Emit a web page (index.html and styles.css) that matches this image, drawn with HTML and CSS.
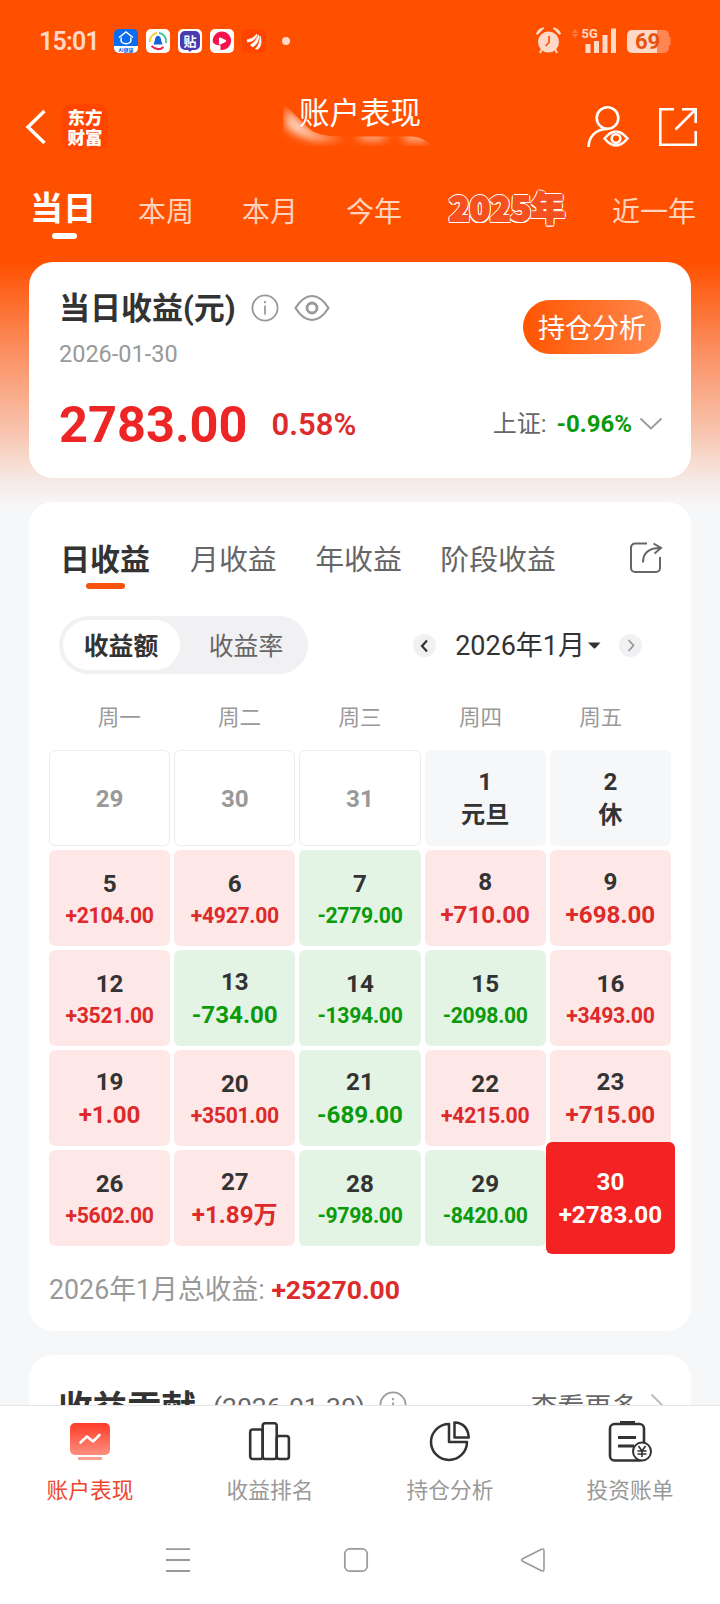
FILE: index.html
```html
<!DOCTYPE html>
<html lang="zh-CN">
<head>
    <meta charset="UTF-8">
    <meta name="viewport" content="width=device-width, initial-scale=1.0">
    <title>账户表现</title>
    <link rel="stylesheet" href="styles.css">
</head>
<body>
    <div class="app">
        <!-- Status bar -->
        <div class="status-bar">
            <span class="clock">15:01</span>
            <div class="apps">
                <svg width="24" height="24" viewBox="0 0 24 24">
                    <rect width="24" height="24" rx="5" fill="#0a6cf0"/>
                    <path d="M0 17h24v2a5 5 0 0 1-5 5H5a5 5 0 0 1-5-5z" fill="#fff"/>
                    <path d="M5 8.500l7-5.500 7 5.500M7.500 8.500a5.500 5.500 0 0 0 0 4.500q4.500 3.500 9 0a5.500 5.500 0 0 0 0-4.500" fill="none" stroke="#fff" stroke-width="1.500"/>
                    <text x="12" y="22.500" class="tiny" font-size="5" fill="#0a6cf0">AI健康</text>
                </svg>
                <svg width="24" height="24" viewBox="0 0 24 24">
                    <rect width="24" height="24" rx="5" fill="#fff"/>
                    <g fill="none" stroke-width="1.800">
                        <path d="M4 13A8.500 8.500 0 0 1 11 3.800" stroke="#f5c92e"/>
                        <path d="M13 3.800A8.500 8.500 0 0 1 20 14" stroke="#2fc0a0"/>
                        <path d="M5.500 17q6.500 6 12 1" stroke="#e5204e"/>
                    </g>
                    <path d="M12 6.500q3 1 3.200 5l1.300 4h-9l1.300-4q.2-4 3.200-5z" fill="#1565d8"/>
                </svg>
                <svg width="24" height="24" viewBox="0 0 24 24">
                    <rect width="24" height="24" rx="5" fill="#fff"/>
                    <path d="M7 2h10a5 5 0 0 1 5 5v9a5 5 0 0 1-5 5h-3l-2 2-2-2H7a5 5 0 0 1-5-5V7a5 5 0 0 1 5-5z" fill="#4a3bb0"/>
                    <text x="12" y="16.500" class="tiny" font-size="13" fill="#fff">贴</text>
                </svg>
                <svg width="24" height="24" viewBox="0 0 24 24">
                    <rect width="24" height="24" rx="5" fill="#fff"/>
                    <path d="M12 2.500a9.300 9.300 0 1 1-1.500 18.500V16.500Q4 16 2.800 13A9.300 9.300 0 0 1 12 2.500z" fill="#f5124a"/>
                    <path d="M10 9.500l5 2.500-5 2.500z" fill="#fff" stroke="#fff" stroke-width="2.200" stroke-linejoin="round"/>
                </svg>
                <svg width="24" height="24" viewBox="0 0 24 24">
                    <rect width="24" height="24" rx="5" fill="#ff4400"/>
                    <path d="M5 11q6-1 10-6-1 7-9.500 8zM8.500 16q6-3 8-10 1 8-6 12zM13.500 20q5-5 4.500-13 3 8-2 13z" fill="#fff" stroke="#fff" stroke-width=".8"/>
                </svg>
            </div>
            <span class="more-dot"></span>
            <svg class="signals" width="140" height="28" viewBox="0 0 140 28">
                <g fill="#ffd8c7">
                    <circle cx="12.500" cy="15" r="10.500"/>
                    <path d="M.5 7Q2 1 8 1L1.500 7.500zM24.500 7Q23 1 17 1l6.500 6.500z" stroke="#ffd8c7"/>
                    <path d="M6 22l-2 4M19 22l2 4" stroke="#ffd8c7" stroke-width="2"/>
                    <path d="M49.500 17h5v9h-5zM58 14h5v12h-5zM66.500 8h5v18h-5zM75 1.500h5V26h-5z"/>
                    <path d="M96 3h25v23H96a5 5 0 0 1-5-5V8a5 5 0 0 1 5-5z"/>
                </g>
                <path d="M13 9v6.500L9.500 19" fill="none" stroke="#ff5000" stroke-width="1.700"/>
                <path d="M39 2l3 4h-6zM39 11l3-4h-6z" fill="#ff7a3f"/>
                <path d="M121 3h7a5 5 0 0 1 5 5v2h1.500v8H133v3a5 5 0 0 1-5 5h-7z" fill="#ff8650"/>
                <text x="45.500" y="11" class="net" fill="#ffd8c7">5G</text>
                <text x="99" y="22" class="level" fill="#e8520f">69</text>
            </svg>
        </div>

        <!-- Title bar -->
        <div class="title-bar">
            <svg class="back" width="22" height="36" viewBox="0 0 22 36"><path d="M19.500 2L3 18l16.500 16" fill="none" stroke="#fff" stroke-width="3.400"/></svg>
            <div class="brand"><span>东方</span><span>财富</span></div>
            <div class="title">
                <svg class="title-glow" width="160" height="44" viewBox="0 0 160 44">
                    <defs>
                        <filter id="soft" x="-50%" y="-100%" width="200%" height="300%"><feGaussianBlur stdDeviation="4"/></filter>
                        <clipPath id="under"><path d="M1 0Q6 2 9 5.500L26 22.500Q34 31.500 62 31.500H130Q142 32 150 41H1z"/></clipPath>
                    </defs>
                    <g clip-path="url(#under)">
                        <g fill="#fff" filter="url(#soft)">
                            <path d="M4 3L26 23Q36 32 62 32Q44 37 28 34Q12 30 4 22z" opacity=".75"/>
                            <ellipse cx="90" cy="31" rx="15" ry="5" opacity=".55"/>
                            <ellipse cx="134" cy="31" rx="14" ry="6" opacity=".55"/>
                        </g>
                    </g>
                </svg>
                <span>账户表现</span>
            </div>
            <svg class="user" width="44" height="44" viewBox="0 0 44 44" fill="none" stroke="#fff" stroke-width="2.600">
                <circle cx="21.500" cy="13" r="10.800"/>
                <path d="M2.500 42C3 31 10 24 21.500 24"/>
                <path d="M18.500 33.500q11.500-14 23 0-11.500 14-23 0z"/>
                <circle cx="30" cy="33.500" r="4.300"/>
            </svg>
            <svg class="open" width="40" height="40" viewBox="0 0 40 40" fill="none" stroke="#fff" stroke-width="2.600">
                <path d="M16 2.300H2.300v35.400h35.400V24M24 2.300h13.700V16M37 3L17.500 22.500"/>
            </svg>
        </div>

        <!-- Period tabs -->
        <div class="periods">
            <span class="period current">当日</span>
            <span class="period">本周</span>
            <span class="period">本月</span>
            <span class="period">今年</span>
            <span class="period year">2025年</span>
            <span class="period">近一年</span>
        </div>

        <div class="content">
            <!-- Today's profit -->
            <div class="card today">
                <div class="today-top">
                    <div>
                        <div class="today-title">
                            <span>当日收益(元)</span>
                            <svg class="info" width="28" height="28" viewBox="0 0 28 28" fill="none" stroke="#999" stroke-width="1.800">
                                <circle cx="14" cy="14" r="12.600"/><path d="M14 11.500v9M14 7v2.300"/>
                            </svg>
                            <svg class="eye" width="36" height="28" viewBox="0 0 36 28" fill="none" stroke="#999" stroke-width="2.200">
                                <path d="M1.500 14Q9 2 18 2t16.500 12Q27 26 18 26T1.500 14z"/><circle cx="18" cy="14" r="5" stroke-width="2.800"/>
                            </svg>
                        </div>
                        <div class="date">2026-01-30</div>
                    </div>
                    <button class="analyse">持仓分析</button>
                </div>
                <div class="today-bottom">
                    <span class="amount">2783.00</span>
                    <span class="rate">0.58%</span>
                    <span class="index">上证:</span>
                    <span class="index-rate">-0.96%</span>
                    <svg class="more" width="22" height="14" viewBox="0 0 22 14"><path d="M.5 1.500l10.500 10 10.500-10" fill="none" stroke="#999" stroke-width="1.800"/></svg>
                </div>
            </div>

            <!-- Profit calendar -->
            <div class="card profit">
                <div class="profit-tabs">
                    <span class="profit-tab current">日收益</span>
                    <span class="profit-tab">月收益</span>
                    <span class="profit-tab">年收益</span>
                    <span class="profit-tab">阶段收益</span>
                    <svg class="share" width="34" height="34" viewBox="0 0 34 34" fill="none" stroke="#666" stroke-width="2">
                        <path d="M18 2.500H6a4 4 0 0 0-4 4V27a4 4 0 0 0 4 4h21a4 4 0 0 0 4-4V16"/>
                        <path d="M14 21.500Q14 7 31 7M24.500 2.500L32 7l-6.500 5.500"/>
                    </svg>
                </div>
                <div class="controls">
                    <div class="switch">
                        <span class="option on">收益额</span>
                        <span class="option">收益率</span>
                    </div>
                    <div class="month">
                        <span class="arrow"><svg width="23" height="23" viewBox="0 0 23 23"><path d="M14 6.500L9 12l5 5.500" fill="none" stroke="#333" stroke-width="2.200"/></svg></span>
                        <span class="month-name">2026年1月</span>
                        <svg class="caret" width="13" height="7" viewBox="0 0 13 7"><path d="M0 .5h12.500L7.500 6q-1 1-2 0z" fill="#333"/></svg>
                        <span class="arrow"><svg width="23" height="23" viewBox="0 0 23 23"><path d="M9.500 6l5 5.500-5 5.500" fill="none" stroke="#999" stroke-width="1.800"/></svg></span>
                    </div>
                </div>
                <div class="weekdays">
                    <span>周一</span><span>周二</span><span>周三</span><span>周四</span><span>周五</span>
                </div>
                <div class="calendar-grid">
                    <div class="day other"><b>29</b></div>
                    <div class="day other"><b>30</b></div>
                    <div class="day other"><b>31</b></div>
                    <div class="day rest"><b>1</b><span class="big">元旦</span></div>
                    <div class="day rest"><b>2</b><span class="big">休</span></div>

                    <div class="day up"><b>5</b><span>+2104.00</span></div>
                    <div class="day up"><b>6</b><span>+4927.00</span></div>
                    <div class="day down"><b>7</b><span>-2779.00</span></div>
                    <div class="day up"><b>8</b><span class="big">+710.00</span></div>
                    <div class="day up"><b>9</b><span class="big">+698.00</span></div>

                    <div class="day up"><b>12</b><span>+3521.00</span></div>
                    <div class="day down"><b>13</b><span class="big">-734.00</span></div>
                    <div class="day down"><b>14</b><span>-1394.00</span></div>
                    <div class="day down"><b>15</b><span>-2098.00</span></div>
                    <div class="day up"><b>16</b><span>+3493.00</span></div>

                    <div class="day up"><b>19</b><span class="big">+1.00</span></div>
                    <div class="day up"><b>20</b><span>+3501.00</span></div>
                    <div class="day down"><b>21</b><span class="big">-689.00</span></div>
                    <div class="day up"><b>22</b><span>+4215.00</span></div>
                    <div class="day up"><b>23</b><span class="big">+715.00</span></div>

                    <div class="day up"><b>26</b><span>+5602.00</span></div>
                    <div class="day up"><b>27</b><span class="big">+1.89万</span></div>
                    <div class="day down"><b>28</b><span>-9798.00</span></div>
                    <div class="day down"><b>29</b><span>-8420.00</span></div>
                    <div class="day selected"><b>30</b><span class="big">+2783.00</span></div>
                </div>
                <div class="total">2026年1月总收益: <b>+25270.00</b></div>
            </div>

            <!-- Contribution -->
            <div class="card contribution">
                <span class="contribution-title">收益贡献</span>
                <span class="contribution-date">(2026-01-30)</span>
                <svg width="28" height="28" viewBox="0 0 28 28" fill="none" stroke="#999" stroke-width="1.800">
                    <circle cx="14" cy="14" r="12.600"/><path d="M14 11.500v9M14 7v2.300"/>
                </svg>
                <span class="see-more">查看更多</span>
                <svg width="14" height="24" viewBox="0 0 14 24"><path d="M1.500 1.500L12 12 1.500 22.500" fill="none" stroke="#bbb" stroke-width="2"/></svg>
            </div>
        </div>

        <!-- Bottom tabs -->
        <div class="tab-bar">
            <div class="tab active">
                <svg width="44" height="44" viewBox="0 0 44 44">
                    <defs>
                        <linearGradient id="screen" x1="0" y1="0" x2="0" y2="1">
                            <stop offset="0" stop-color="#fd3c26"/><stop offset="1" stop-color="#fe8f80"/>
                        </linearGradient>
                    </defs>
                    <rect x="2" y="3" width="40" height="32" rx="5" fill="url(#screen)"/>
                    <rect x="10" y="37" width="24" height="3" rx="1" fill="#f8a090"/>
                    <path d="M12.500 22.500l6.500-6 6 5 6.500-6.500" fill="none" stroke="#fff" stroke-width="2.600" stroke-linecap="round" stroke-linejoin="round"/>
                </svg>
                <span>账户表现</span>
            </div>
            <div class="tab">
                <svg width="44" height="44" viewBox="0 0 44 44" fill="none" stroke="#333" stroke-width="2.600">
                    <rect x="2.200" y="9.500" width="12.500" height="29.500" rx="2.500"/>
                    <rect x="14.700" y="3.200" width="14" height="35.800" rx="2.500"/>
                    <rect x="28.700" y="16" width="12.200" height="23" rx="2.500"/>
                </svg>
                <span>收益排名</span>
            </div>
            <div class="tab">
                <svg width="44" height="44" viewBox="0 0 44 44" fill="none" stroke="#333" stroke-width="2.500" stroke-linejoin="round">
                    <path d="M21 4A18 18 0 1 0 39 22H21z"/>
                    <path d="M26.500 2.500v15h14.300Q39.500 3 26.500 2.500z"/>
                </svg>
                <span>持仓分析</span>
            </div>
            <div class="tab">
                <svg width="44" height="44" viewBox="0 0 44 44" fill="none" stroke="#333" stroke-width="2.600">
                    <rect x="2" y="4" width="34" height="36.500" rx="4.500"/>
                    <path d="M12 3h15" stroke-width="4"/>
                    <path d="M10 17.500h18M10 26h16" stroke-width="2.800"/>
                    <circle cx="34" cy="31.500" r="9" fill="#fff" stroke-width="2"/>
                    <path d="M30.500 26l3.500 5 3.500-5M34 30.500V37M29.500 31h9M29.500 34h9" stroke-width="1.600"/>
                </svg>
                <span>投资账单</span>
            </div>
        </div>

        <!-- System navigation -->
        <div class="system-nav">
            <svg width="26" height="26" viewBox="0 0 26 26"><path d="M1 2.200h24M1 13h24M1 24h24" stroke="#999" stroke-width="1.800"/></svg>
            <svg width="26" height="26" viewBox="0 0 26 26"><rect x="1.800" y="1.800" width="22.400" height="22.400" rx="5" fill="none" stroke="#999" stroke-width="1.700"/></svg>
            <svg width="26" height="26" viewBox="0 0 26 26"><path d="M2.600 11.800L21.500 2.200Q24 1.300 24 4v18q0 2.700-2.500 1.800L2.600 14.200q-2-1.200 0-2.400z" fill="none" stroke="#999" stroke-width="1.600"/></svg>
        </div>
    </div>
</body>
</html>
```
FILE: styles.css
```css
html, body {
    margin: 0;
    height: 100%;
    overflow: hidden;
    font-family: Roboto, "Noto Sans CJK SC", sans-serif;
    color: #333;
}
* {
    box-sizing: border-box;
}
svg {
    display: block;
    flex: none;
    overflow: visible;
}
.app {
    display: flex;
    flex-direction: column;
    width: 720px;
    height: 1604px;
    white-space: nowrap;
    background: linear-gradient(#ff5000 262px, #fb8e5f 350px, #f8c3ad 430px, #f5e9e4 480px, #f6f7f9 508px);
}

/* Status bar */
.status-bar {
    display: flex;
    align-items: center;
    height: 82px;
    padding: 0 44px 0 39px;
}
.clock {
    width: 75px;
    font-size: 25px;
    font-weight: 600;
    letter-spacing: -0.8px;
    color: #ffd8c7;
}
.apps {
    display: flex;
    gap: 8px;
}
.tiny {
    font-weight: bold;
    text-anchor: middle;
}
.more-dot {
    width: 8px;
    height: 8px;
    margin-left: 16px;
    border-radius: 50%;
    background: #ffd8c7;
}
.signals {
    margin-left: auto;
}
.net {
    font-size: 13px;
    font-weight: bold;
}
.level {
    font-size: 22px;
    font-weight: bold;
}

/* Title bar */
.title-bar {
    display: flex;
    align-items: center;
    height: 90px;
    padding: 0 22px 0 25px;
}
.brand {
    display: flex;
    flex-direction: column;
    align-items: center;
    justify-content: center;
    width: 46px;
    height: 46px;
    margin-left: 15px;
    border-radius: 9px;
    background: #ff4500;
    color: #fff;
    font-size: 17.5px;
    font-weight: 900;
    line-height: 20px;
    font-family: "Noto Sans CJK SC", sans-serif;
}
.title {
    position: relative;
    margin: 0 auto 26px 191px;
    color: #fff;
    font-size: 30.5px;
    line-height: 40px;
}
.title span {
    position: relative;
}
.title-glow {
    position: absolute;
    left: -17px;
    top: 11px;
}
.open {
    margin-left: 28px;
}

/* Period tabs */
.periods {
    display: flex;
    align-items: center;
    gap: 48px;
    height: 90px;
    padding: 0 0 9px 30px;
}
.period {
    color: #ffd3bd;
    font-size: 28px;
    line-height: 40px;
}
.period.current {
    position: relative;
    margin: 0 -6px 8px 0;
    color: #fff;
    font-size: 33px;
    font-weight: bold;
}
.period.current::after {
    content: "";
    position: absolute;
    left: 22px;
    bottom: -10px;
    width: 25px;
    height: 6px;
    border-radius: 3px;
    background: #fff;
}
/* thick letters with a white outline */
.period.year {
    width: 116px;
    margin: 0 -1px 11px -1px;
    color: #f4511e;
    font-family: "Noto Sans CJK SC", sans-serif;
    font-size: 34px;
    font-weight: 900;
    letter-spacing: -0.2px;
    -webkit-text-stroke: 2px #f4511e;
    text-shadow: 2px 0 #fff, -2px 0 #fff, 0 2px #fff, 0 -2px #fff,
        1.5px 1.5px #fff, -1.5px 1.5px #fff, 1.5px -1.5px #fff, -1.5px -1.5px #fff;
}

/* Cards */
.content {
    display: flex;
    flex: 1;
    flex-direction: column;
    gap: 24px;
    min-height: 0;
    padding: 0 29px;
    overflow: hidden;
}
.card {
    flex: none;
    border-radius: 24px;
    background: #fff;
}
.today {
    height: 216px;
    padding: 26px 30px 0 30px;
}
.today-top {
    display: flex;
    justify-content: space-between;
}
.today-title {
    display: flex;
    align-items: center;
    font-size: 31px;
    font-weight: bold;
    line-height: 42px;
}
.info {
    margin: 0 0 2px 15px;
}
.eye {
    margin: 0 0 3px 15px;
}
.date {
    margin-top: 10px;
    color: #999;
    font-size: 23.5px;
    line-height: 28px;
}
.analyse {
    width: 138px;
    height: 54px;
    margin-top: 12px;
    padding: 0 0 1px;
    border: none;
    border-radius: 27px;
    background: linear-gradient(90deg, #ff5500, #ff8a50);
    color: #fff;
    font-family: inherit;
    font-size: 27px;
}
.today-bottom {
    display: flex;
    align-items: center;
    margin-top: 26px;
    line-height: 60px;
}
.amount {
    color: #ee2525;
    font-size: 50.5px;
    font-weight: bold;
}
.rate {
    margin-left: 24px;
    color: #dd2c2c;
    font-size: 31px;
    font-weight: 600;
}
.index {
    margin: 0 0 2px auto;
    color: #666;
    font-size: 24px;
}
.index-rate {
    margin: 0 8px 2px 10px;
    color: #0b9a0b;
    font-size: 24px;
    font-weight: bold;
}
.more {
    margin: 0 -1px 3px 0;
}

/* Profit calendar */
.profit {
    height: 829px;
    padding: 36px 20px 0;
}
.profit-tabs {
    display: flex;
    align-items: center;
    padding: 0 8px 0 11px;
    color: #666;
    font-size: 28.9px;
    line-height: 44px;
}
.profit-tab {
    margin-right: 38.5px;
}
.profit-tab.current {
    position: relative;
    margin-right: 40px;
    color: #333;
    font-size: 30px;
    font-weight: bold;
}
.profit-tab.current::after {
    content: "";
    position: absolute;
    left: 26px;
    bottom: -7px;
    width: 39px;
    height: 6px;
    border-radius: 3px;
    background: #f8520c;
}
.share {
    margin: 0 0 4px auto;
}
.controls {
    display: flex;
    justify-content: space-between;
    margin-top: 34px;
    padding: 0 29px 0 10px;
}
.switch {
    display: flex;
    width: 249px;
    height: 58px;
    padding: 4px;
    border-radius: 29px;
    background: #f1f1f4;
}
.option {
    flex: 1;
    padding-left: 8px;
    border-radius: 25px;
    color: #666;
    font-size: 24.8px;
    line-height: 54px;
    text-align: center;
}
.option.on {
    flex: none;
    width: 117px;
    padding: 0 1px 0 0;
    background: #fff;
    color: #333;
    font-weight: bold;
}
.month {
    display: flex;
    align-items: center;
}
.arrow {
    border-radius: 50%;
    background: #f1f1f4;
}
.month-name {
    margin: 1px 3px 0 19px;
    font-size: 27px;
    line-height: 40px;
}
.caret {
    margin-right: 18px;
}
.weekdays {
    display: flex;
    margin-top: 28px;
    padding: 0 10px;
    color: #999;
    font-size: 21.5px;
    line-height: 32px;
}
.weekdays span {
    flex: 1;
    text-align: center;
}
.calendar-grid {
    display: grid;
    grid-template-columns: repeat(5, 1fr);
    grid-auto-rows: 96px;
    gap: 4px;
    margin-top: 16px;
}
.day {
    display: flex;
    flex-direction: column;
    align-items: center;
    justify-content: center;
    padding-top: 2px;
    border-radius: 6px;
    font-size: 21.2px;
    font-weight: bold;
    letter-spacing: -0.3px;
    line-height: 29px;
}
.day b,
.day .big {
    font-size: 24.2px;
    font-weight: bold;
    letter-spacing: 0;
    line-height: 33px;
}
.day.other {
    border: 1px solid #ebebeb;
    color: #999;
}
.day.rest {
    background: #f6f7f9;
}
.day.up {
    background: #fde8e7;
}
.day.up span {
    color: #dd2a2a;
}
.day.down {
    background: #e3f4e5;
}
.day.down span {
    color: #0b9a0b;
}
.day.selected {
    margin: -8px -4px;
    background: #f42323;
    color: #fff;
}
.total {
    margin-top: 26px;
    color: #999;
    font-size: 26.8px;
    line-height: 36px;
}
.total b {
    color: #dd2a2a;
    font-size: 26.5px;
    font-weight: bold;
}

/* Contribution */
.contribution {
    display: flex;
    align-items: center;
    height: 200px;
    padding: 0 27px 100px 29px;
}
.contribution-title {
    font-size: 34.5px;
    font-weight: bold;
}
.contribution-date {
    margin: 3px 14px 0 17px;
    color: #666;
    font-size: 26.5px;
}
.see-more {
    margin: 0 12px 0 auto;
    color: #666;
    font-size: 26.8px;
}

/* Bottom tabs */
.tab-bar {
    display: flex;
    height: 115px;
    border-top: 1px solid #e6e6e6;
    background: #fff;
}
.tab {
    display: flex;
    flex: 1;
    flex-direction: column;
    align-items: center;
    padding-top: 14px;
    color: #999;
    font-size: 21.7px;
    line-height: 30px;
}
.tab span {
    margin-top: 12px;
}
.tab.active {
    color: #ee4630;
}

/* System navigation */
.system-nav {
    display: flex;
    justify-content: space-between;
    height: 84px;
    padding: 27px 174px 0 165px;
    background: #fff;
}
```
